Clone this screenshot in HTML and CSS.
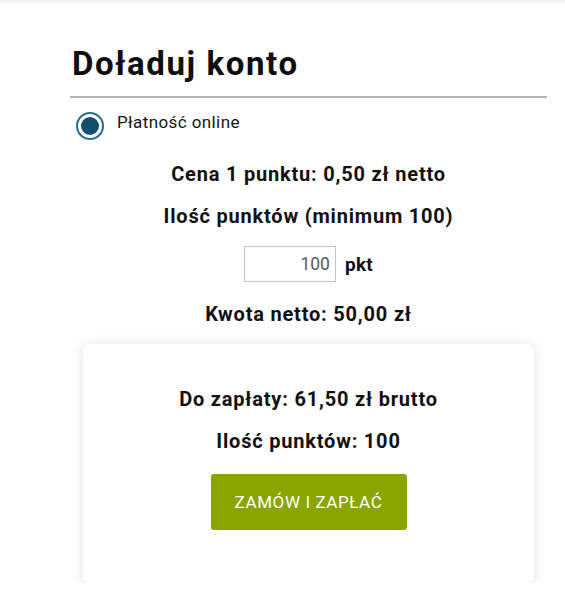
FILE: index.html
```html
<!DOCTYPE html>
<html lang="pl">
<head>
<meta charset="utf-8">
<title>Doładuj konto</title>
<link rel="stylesheet" href="styles.css">
</head>
<body>
<div class="topbar"></div>
<main class="wrap">
  <h1 class="title">Doładuj konto</h1>
  <label class="radio-row">
    <span class="radio"><span class="radio-dot"></span></span>
    <span class="radio-label">Płatność online</span>
  </label>
  <section class="calc">
    <p class="line line-price">Cena 1 punktu: 0,50 zł netto</p>
    <p class="line line-qty">Ilość punktów (minimum 100)</p>
    <div class="qty-row">
      <input class="qty-input" type="text" value="100">
      <span class="unit">pkt</span>
    </div>
    <p class="line line-net">Kwota netto: 50,00 zł</p>
  </section>
  <section class="card">
    <p class="line line-gross">Do zapłaty: 61,50 zł brutto</p>
    <p class="line line-points">Ilość punktów: 100</p>
    <button class="pay-btn" type="button">Zamów i zapłać</button>
  </section>
</main>
</body>
</html>
```

FILE: styles.css
```css
* { box-sizing: border-box; }
html, body { margin: 0; padding: 0; background: #ffffff; }
body {
  font-family: Roboto, "Liberation Sans", Arial, sans-serif;
  color: #111111;
}
.topbar {
  height: 3px;
  background: #f2f5f8;
}
.wrap {
  width: 477px;
  margin-left: 70px;
  display: flex;
  flex-direction: column;
}
.title {
  margin: 43px 0 0 0;
  padding: 0 0 14px 2px;
  font-size: 33px;
  line-height: 36px;
  font-weight: 700;
  letter-spacing: 1.6px;
  color: #0d0d0d;
  border-bottom: 2px solid #b4b4b4;
}
.radio-row {
  display: flex;
  align-items: flex-start;
  gap: 13px;
  margin: 14px 0 0 6px;
}
.radio {
  width: 28px;
  height: 28px;
  border-radius: 50%;
  border: 2px solid #2a6d8c;
  display: flex;
  align-items: center;
  justify-content: center;
  flex: none;
}
.radio-dot {
  width: 18px;
  height: 18px;
  border-radius: 50%;
  background: #114f6e;
}
.radio-label {
  font-size: 17px;
  line-height: 20px;
  letter-spacing: 0.4px;
  color: #151515;
}
.calc {
  display: flex;
  flex-direction: column;
  align-items: center;
}
.line {
  margin: 0;
  font-size: 20px;
  line-height: 20px;
  font-weight: 700;
  letter-spacing: 0.8px;
  color: #111111;
  text-align: center;
}
.line-price { margin-top: 24px; }
.line-qty { margin-top: 22px; }
.qty-row {
  margin-top: 20px;
  display: flex;
  align-items: center;
  gap: 9px;
}
.qty-input {
  width: 92px;
  height: 36px;
  border: 1px solid #c4c4c4;
  border-radius: 0;
  padding: 0 5px;
  text-align: right;
  font-family: inherit;
  font-size: 17.5px;
  color: #555b66;
  background: #fff;
  outline: none;
}
.unit {
  font-size: 19px;
  font-weight: 700;
  letter-spacing: 0.3px;
  color: #111;
}
.line-net { margin-top: 22px; }
.card {
  margin: 20px 13px 0 13px;
  padding: 45px 0 53px 0;
  background: #fff;
  border-radius: 6px;
  box-shadow: 0 1px 12px rgba(0, 0, 0, 0.13);
  display: flex;
  flex-direction: column;
  align-items: center;
}
.line-points { margin-top: 22px; }
.pay-btn {
  margin-top: 23px;
  width: 196px;
  height: 56px;
  border: none;
  border-radius: 3px;
  background: #8aa500;
  color: #ffffff;
  font-family: inherit;
  font-size: 17px;
  letter-spacing: 0.6px;
  text-transform: uppercase;
  cursor: pointer;
}
```
